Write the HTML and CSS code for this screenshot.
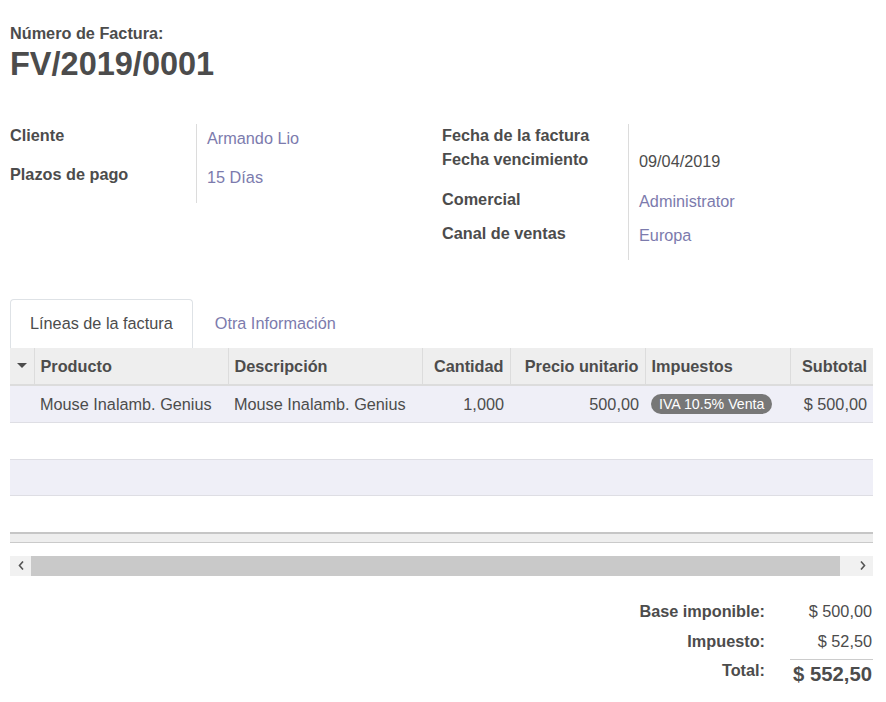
FILE: index.html
```html
<!DOCTYPE html>
<html lang="es">
<head>
<meta charset="utf-8">
<title>FV/2019/0001</title>
<link rel="stylesheet" href="styles.css">
</head>
<body>
<div class="sheet">
  <div class="title-label">Número de Factura:</div>
  <h1 class="title">FV/2019/0001</h1>

  <div class="groups">
    <div class="group">
      <div class="field h39"><div class="lbl">Cliente</div><div class="val link">Armando Lio</div></div>
      <div class="field h40"><div class="lbl">Plazos de pago</div><div class="val link">15 Días</div></div>
    </div>
    <div class="group">
      <div class="field h23"><div class="lbl">Fecha de la factura</div><div class="val"></div></div>
      <div class="field h40"><div class="lbl">Fecha vencimiento</div><div class="val">09/04/2019</div></div>
      <div class="field h34"><div class="lbl">Comercial</div><div class="val link">Administrator</div></div>
      <div class="field h38"><div class="lbl">Canal de ventas</div><div class="val link">Europa</div></div>
    </div>
  </div>

  <div class="tabs">
    <div class="tab active">Líneas de la factura</div>
    <div class="tab link">Otra Información</div>
  </div>

  <table class="lines">
    <colgroup>
      <col class="c-caret"><col class="c-prod"><col class="c-desc"><col class="c-qty"><col class="c-price"><col class="c-tax"><col class="c-sub">
    </colgroup>
    <thead>
      <tr>
        <th class="caret-cell"><svg width="10" height="5" viewBox="0 0 10 5"><path d="M0 0h10L5 5z" fill="#4c4c4c"/></svg></th>
        <th>Producto</th>
        <th>Descripción</th>
        <th class="num">Cantidad</th>
        <th class="num">Precio unitario</th>
        <th>Impuestos</th>
        <th class="num">Subtotal</th>
      </tr>
    </thead>
    <tbody>
      <tr class="odd">
        <td></td>
        <td>Mouse Inalamb. Genius</td>
        <td>Mouse Inalamb. Genius</td>
        <td class="num">1,000</td>
        <td class="num">500,00</td>
        <td><span class="badge">IVA 10.5% Venta</span></td>
        <td class="num">$ 500,00</td>
      </tr>
      <tr><td colspan="7"></td></tr>
      <tr class="odd short"><td colspan="7"></td></tr>
      <tr class="short"><td colspan="7"></td></tr>
    </tbody>
    <tfoot>
      <tr><td colspan="7"></td></tr>
    </tfoot>
  </table>

  <div class="hscroll">
    <div class="sb-btn"><svg width="6" height="9" viewBox="0 0 6 9"><path d="M5 0.5L1.5 4.5L5 8.5" fill="none" stroke="#555" stroke-width="1.6"/></svg></div>
    <div class="sb-thumb"></div>
    <div class="sb-track"></div>
    <div class="sb-btn"><svg width="6" height="9" viewBox="0 0 6 9"><path d="M1 0.5L4.5 4.5L1 8.5" fill="none" stroke="#555" stroke-width="1.6"/></svg></div>
  </div>

  <div class="totals">
    <div class="t-lbl">Base imponible:</div><div class="t-val">$ 500,00</div>
    <div class="t-lbl">Impuesto:</div><div class="t-val">$ 52,50</div>
    <div class="t-lbl total-lbl">Total:</div><div class="t-val total-val">$ 552,50</div>
  </div>
</div>
</body>
</html>
```

FILE: styles.css
```css
html, body {
  margin: 0;
  padding: 0;
  background: #ffffff;
}
body {
  font-family: "Liberation Sans", Arial, sans-serif;
  font-size: 16.25px;
  line-height: 20px;
  color: #4c4c4c;
}
.sheet {
  width: 863px;
  padding: 0 13px 0 10px;
}
.title-label {
  margin-top: 23px;
  font-weight: bold;
}
.title {
  margin: 1px 0 0 0;
  font-size: 32.5px;
  line-height: 40px;
  font-weight: bold;
}
.link {
  color: #7c7bad;
}

/* field groups */
.groups {
  margin-top: 40px;
  display: grid;
  grid-template-columns: 432px 431px;
  align-items: start;
}
.field {
  display: grid;
  grid-template-columns: 186px 1fr;
}
.field.h23 { height: 23.5px; }
.field.h34 { height: 34px; }
.field.h38 { height: 38px; }
.field.h39 { height: 39px; }
.field.h40 { height: 40px; }
.lbl {
  font-weight: bold;
  padding-top: 1px;
}
.val {
  border-left: 1px solid #dcdcdc;
  padding: 3.5px 0 0 10px;
}

/* tabs */
.tabs {
  margin-top: 39px;
  display: flex;
  align-items: flex-end;
}
.tab {
  padding: 13px 20px 15px;
  border: 1px solid transparent;
  border-bottom: none;
}
.tab.active {
  padding: 13px 19px 15px;
  border-color: #dee2e6;
  border-radius: 4px 4px 0 0;
  background: #fff;
}
.tab.link {
  margin-left: 1px;
}

/* table */
.lines {
  width: 863px;
  border-collapse: collapse;
  table-layout: fixed;
}
.c-caret { width: 24px; }
.c-prod { width: 194px; }
.c-desc { width: 194px; }
.c-qty { width: 88px; }
.c-price { width: 135px; }
.c-tax { width: 145px; }
.c-sub { width: 83px; }
.lines th {
  background: #eeeeee;
  height: 36px;
  padding: 0 6px;
  text-align: left;
  font-weight: bold;
  white-space: nowrap;
  border-left: 1px solid #dcdcdc;
  border-bottom: 2px solid #dcdcdc;
  vertical-align: middle;
}
.lines th:first-child {
  border-left: none;
}
.lines th.caret-cell {
  padding: 0 0 0 7px;
  text-align: left;
}
.caret-cell svg {
  display: block;
}
.lines th.num, .lines td.num {
  text-align: right;
}
.lines tbody td {
  height: 36px;
  padding: 0 6px;
  white-space: nowrap;
  border-bottom: 1px solid #dedee4;
  vertical-align: middle;
}
.lines tbody tr.short td {
  height: 35.5px;
}
.lines tbody tr.odd td {
  background: #efeff7;
}
.lines tfoot td {
  height: 8px;
  padding: 0;
  background: #eeeeee;
  border-top: 2px solid #c6c6c6;
  border-bottom: 1px solid #cacaca;
}
.badge {
  display: inline-block;
  background: #777777;
  color: #ffffff;
  font-size: 14.2px;
  line-height: 20px;
  padding: 0 8px;
  border-radius: 10px;
}

/* fake horizontal scrollbar */
.hscroll {
  margin-top: 13px;
  height: 20px;
  display: flex;
  background: #f1f1f1;
}
.sb-btn {
  width: 21px;
  display: flex;
  align-items: center;
  justify-content: center;
}
.sb-thumb {
  width: 809px;
  background: #c9c9c9;
}
.sb-track {
  flex: 1;
}

/* totals */
.totals {
  margin-top: 20px;
  display: grid;
  grid-template-columns: auto 83px;
  justify-content: end;
  align-items: start;
}
.t-lbl {
  font-weight: bold;
  text-align: right;
  padding: 5px 25px 5px 0;
}
.t-val {
  text-align: right;
  padding: 5px 1px 5px 0;
}
.total-lbl {
  margin-top: 3px;
  padding-top: 1px;
}
.total-val {
  margin-top: 3px;
  padding-top: 0;
  border-top: 1px solid #cccccc;
  font-size: 20.3px;
  line-height: 28px;
  font-weight: bold;
}
```
